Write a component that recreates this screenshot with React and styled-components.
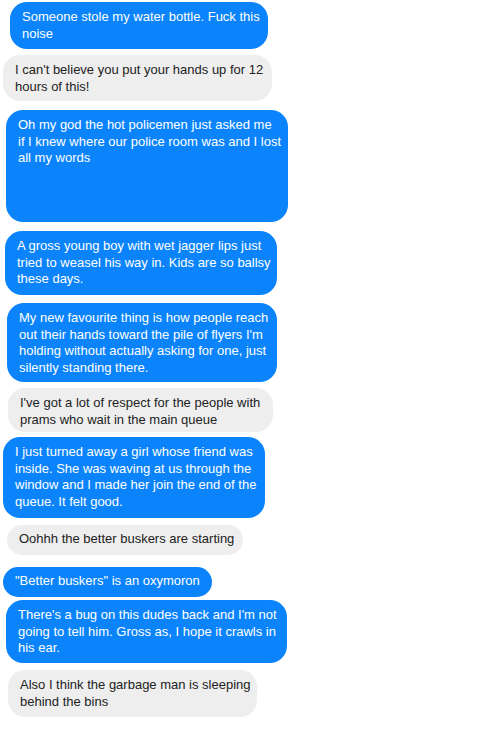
import React from 'react';
import styled, { createGlobalStyle } from 'styled-components';

const messages = [
	{ from: 'me', left: 10, right: 268, gap: 2, height: 47, lines: ['Someone stole my water bottle. Fuck this', 'noise'] },
	{ from: 'them', left: 3, right: 272, gap: 6, height: 46, lines: ["I can't believe you put your hands up for 12", 'hours of this!'] },
	{ from: 'me', left: 6, right: 288, gap: 9, height: 112, lines: ['Oh my god the hot policemen just asked me', 'if I knew where our police room was and I lost', 'all my words'] },
	{ from: 'me', left: 5, right: 277, gap: 9, height: 64, lines: ['A gross young boy with wet jagger lips just', 'tried to weasel his way in. Kids are so ballsy', 'these days.'] },
	{ from: 'me', left: 7, right: 277, gap: 8, height: 79, lines: ['My new favourite thing is how people reach', "out their hands toward the pile of flyers I'm", 'holding without actually asking for one, just', 'silently standing there.'] },
	{ from: 'them', left: 8, right: 273, gap: 6, height: 44, lines: ["I've got a lot of respect for the people with", 'prams who wait in the main queue'] },
	{ from: 'me', left: 3, right: 265, gap: 5, height: 81, lines: ['I just turned away a girl whose friend was', 'inside. She was waving at us through the', 'window and I made her join the end of the', 'queue. It felt good.'] },
	{ from: 'them', left: 7, right: 243, gap: 7, height: 30, lines: ['Oohhh the better buskers are starting'] },
	{ from: 'me', left: 3, right: 212, gap: 12, height: 30, lines: ['"Better buskers" is an oxymoron'] },
	{ from: 'me', left: 6, right: 287, gap: 3, height: 63, lines: ["There's a bug on this dudes back and I'm not", 'going to tell him. Gross as, I hope it crawls in', 'his ear.'] },
	{ from: 'them', left: 8, right: 257, gap: 7, height: 47, lines: ['Also I think the garbage man is sleeping', 'behind the bins'] },
];

export default function App() {
	return (
		<>
			<GlobalStyle />
			<Thread>
				{messages.map((m, i) => (
					<Bubble
						key={i}
						$from={m.from}
						$left={m.left}
						$width={m.right - m.left}
						$gap={m.gap}
						$height={m.height}
						$single={m.lines.length === 1}
					>
						{m.lines.map((line, j) => (
							<Line key={j}>{line}</Line>
						))}
					</Bubble>
				))}
			</Thread>
		</>
	);
}

const GlobalStyle = createGlobalStyle`
	html, body {
		margin: 0;
		background: #ffffff;
	}
`;

const Thread = styled.div`
	display: flex;
	flex-direction: column;
	align-items: flex-start;
	width: 500px;
	height: 750px;
	background: #ffffff;
	font-family: 'Liberation Sans', Arial, sans-serif;
	font-size: 13px;
	line-height: 16.5px;
`;

const Bubble = styled.div`
	flex: none;
	box-sizing: border-box;
	overflow: hidden;
	margin-top: ${p => p.$gap}px;
	margin-left: ${p => p.$left}px;
	width: ${p => p.$width}px;
	height: ${p => p.$height}px;
	padding: ${p => (p.$single ? '6px 12px 0' : '7px 12px 0')};
	border-radius: ${p => (p.$single ? '15px' : '17px')};
	background: ${p => (p.$from === 'me' ? '#0b84fb' : '#eeeeee')};
	color: ${p => (p.$from === 'me' ? '#ffffff' : '#222222')};
`;

const Line = styled.span`
	display: block;
	white-space: nowrap;
`;
